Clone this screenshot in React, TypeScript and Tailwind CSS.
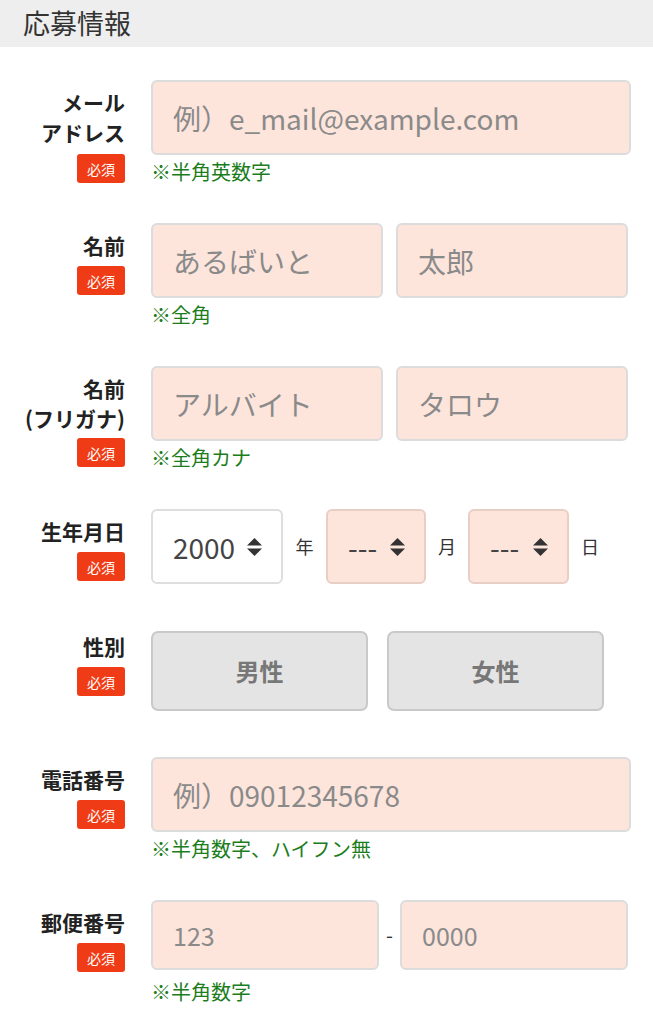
import type { ReactNode } from 'react';

function Badge({ className = 'mt-[7px]' }: { className?: string }) {
    return (
        <span className={`${className} flex h-[29px] w-[48px] items-center justify-center rounded-[3px] bg-[#f03c16] text-[14px] leading-none text-white`}>
            必須
        </span>
    );
}

function Row({ label, badgeClass, labelClass = 'pt-[7px]', className, children }: {
    label: ReactNode;
    badgeClass?: string;
    labelClass?: string;
    className: string;
    children: ReactNode;
}) {
    return (
        <div className={`flex ${className}`}>
            <div className={`flex w-[125px] shrink-0 flex-col items-end ${labelClass}`}>
                <div className="text-right text-[21px] font-bold leading-[30px] text-[#222]">{label}</div>
                <Badge className={badgeClass} />
            </div>
            <div className="ml-[26px] w-[480px]">{children}</div>
        </div>
    );
}

function TextInput({ placeholder, className = '' }: { placeholder: string; className?: string }) {
    return (
        <input
            type="text"
            placeholder={placeholder}
            className={`h-[75px] w-full rounded-[6px] border-2 border-[#dcdcdc] bg-[#fde5dc] pl-[20px] text-[28px] text-[#333] outline-none placeholder:text-[#8a8a8a] ${className}`}
        />
    );
}

function Hint({ children, className = 'mt-[3px]' }: { children: ReactNode; className?: string }) {
    return <p className={`${className} text-[20px] leading-[27px] text-[#1b7d1b]`}>{children}</p>;
}

function Arrows() {
    return (
        <svg width="15" height="18" viewBox="0 0 15 18" className="shrink-0">
            <path d="M7.5 0 L15 7.5 L0 7.5 Z" fill="#333" />
            <path d="M0 10.5 L15 10.5 L7.5 18 Z" fill="#333" />
        </svg>
    );
}

function SelectBox({ value, className }: { value: string; className: string }) {
    return (
        <div className={`flex h-[75px] items-center rounded-[6px] border-2 pr-[19px] ${className}`}>
            <span className="text-[28px] leading-none text-[#444]">{value}</span>
            <span className="ml-auto"><Arrows /></span>
        </div>
    );
}

export default function App() {
    return (
        <div className="min-h-[1024px] w-[653px] bg-white font-['Noto_Sans_CJK_JP','Noto_Sans',sans-serif]">
            <h2 className="h-[47px] bg-[#eeeeee] pl-[23px] text-[27px] leading-[45px] text-[#333]">応募情報</h2>

            <div className="pt-[33px]">
                <Row label={<>メール<br />アドレス</>} className="mb-[38px]">
                    <TextInput placeholder="例）e_mail@example.com" />
                    <Hint>※半角英数字</Hint>
                </Row>

                <Row label="名前" badgeClass="mt-[6px]" className="mb-[38px]">
                    <div className="flex w-[477px] justify-between">
                        <TextInput placeholder="あるばいと" className="!w-[232px]" />
                        <TextInput placeholder="太郎" className="!w-[232px]" />
                    </div>
                    <Hint>※全角</Hint>
                </Row>

                <Row label={<>名前<br />(フリガナ)</>} badgeClass="mt-[5px]" className="mb-[38px]">
                    <div className="flex w-[477px] justify-between">
                        <TextInput placeholder="アルバイト" className="!w-[232px]" />
                        <TextInput placeholder="タロウ" className="!w-[232px]" />
                    </div>
                    <Hint>※全角カナ</Hint>
                </Row>

                <Row label="生年月日" badgeClass="mt-[6px]" className="mb-[47px]">
                    <div className="flex items-center">
                        <SelectBox value="2000" className="w-[132px] border-[#dedede] bg-white pl-[20px]" />
                        <span className="w-[43px] text-center text-[18px] text-[#333]">年</span>
                        <SelectBox value="---" className="w-[100px] border-[#e8cfc6] bg-[#fde5dc] pl-[20px]" />
                        <span className="w-[42px] text-center text-[18px] text-[#333]">月</span>
                        <SelectBox value="---" className="w-[101px] border-[#e8cfc6] bg-[#fde5dc] pl-[20px]" />
                        <span className="w-[42px] text-center text-[18px] text-[#333]">日</span>
                    </div>
                </Row>

                <Row label="性別" labelClass="pt-0" badgeClass="mt-[6px]" className="mb-[46px]">
                    <div className="flex gap-[19px]">
                        <button className="h-[80px] w-[217px] rounded-[7px] border-2 border-[#c9c9c9] bg-[#e4e4e4] text-[24px] font-bold text-[#777]">
                            男性
                        </button>
                        <button className="h-[80px] w-[217px] rounded-[7px] border-2 border-[#c9c9c9] bg-[#e4e4e4] text-[24px] font-bold text-[#777]">
                            女性
                        </button>
                    </div>
                </Row>

                <Row label="電話番号" badgeClass="mt-[6px]" className="mb-[38px]">
                    <TextInput placeholder="例）09012345678" />
                    <Hint>※半角数字、ハイフン無</Hint>
                </Row>

                <Row label="郵便番号" badgeClass="mt-[6px]" className="mb-[20px]">
                    <div className="flex w-[477px] items-center">
                        <TextInput placeholder="123" className="!h-[70px] !w-[228px] !text-[25px]" />
                        <span className="flex-1 text-center text-[20px] text-[#333]">-</span>
                        <TextInput placeholder="0000" className="!h-[70px] !w-[228px] !text-[25px]" />
                    </div>
                    <Hint className="mt-[8px]">※半角数字</Hint>
                </Row>
            </div>
        </div>
    );
}
